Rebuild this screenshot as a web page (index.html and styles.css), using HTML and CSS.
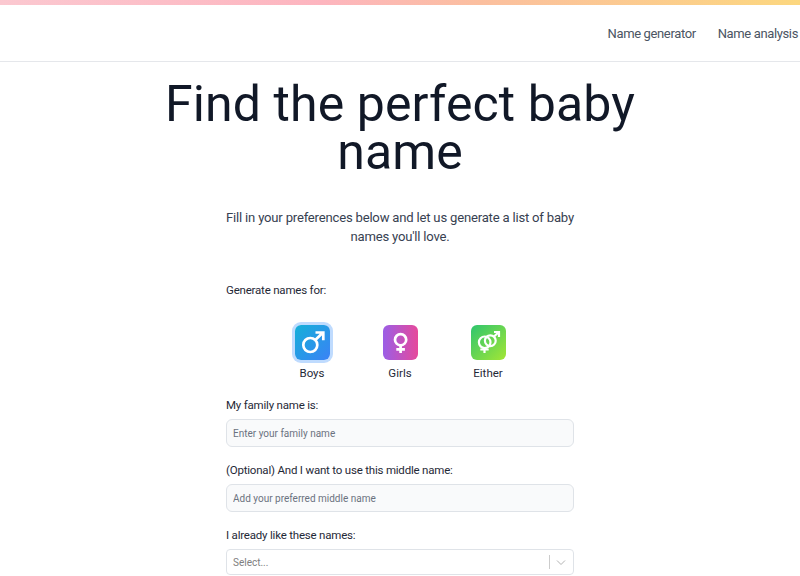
FILE: index.html
```html
<!DOCTYPE html>
<html lang="en">
<head>
    <meta charset="UTF-8">
    <title>Find the perfect baby name</title>
    <link rel="stylesheet" href="styles.css">
</head>
<body>
    <div class="top-stripe"></div>
    <header class="header">
        <a class="nav-link" href="#">Name generator</a>
        <a class="nav-link" href="#">Name analysis</a>
    </header>

    <main class="main-content">
        <h1 class="title">Find the perfect baby name</h1>
        <p class="intro">Fill in your preferences below and let us generate a list of baby names you'll love.</p>

        <form class="name-form">
            <div class="field-label">Generate names for:</div>
            <div class="gender-row">
                <div class="gender">
                    <div class="gender-icon boys selected">
                        <svg viewBox="0 0 35 35" width="35" height="35" fill="none" stroke="#fff" stroke-width="2.7">
                            <circle cx="15.3" cy="20" r="7"/>
                            <path d="M20.3 15L28 7.5M20.5 7.5h7.8v7.8"/>
                        </svg>
                    </div>
                    <span>Boys</span>
                </div>
                <div class="gender">
                    <div class="gender-icon girls">
                        <svg viewBox="0 0 35 35" width="35" height="35" fill="none" stroke="#fff" stroke-width="2.7">
                            <circle cx="17.6" cy="14.7" r="5.6"/>
                            <path d="M17.6 20V28M13.3 24.4h8.6"/>
                        </svg>
                    </div>
                    <span>Girls</span>
                </div>
                <div class="gender">
                    <div class="gender-icon either">
                        <svg viewBox="0 0 35 35" width="35" height="35" fill="none" stroke="#fff" stroke-width="2.2">
                            <circle cx="13.7" cy="17.3" r="5.8"/>
                            <circle cx="19.3" cy="15.7" r="5.4"/>
                            <path d="M23 11.5L27.7 7.3M23 7h5v5M13.5 23V28M9.3 24.5h8.4"/>
                        </svg>
                    </div>
                    <span>Either</span>
                </div>
            </div>

            <label class="field-label" for="family-name">My family name is:</label>
            <input class="text-input" id="family-name" type="text" placeholder="Enter your family name">

            <label class="field-label" for="middle-name">(Optional) And I want to use this middle name:</label>
            <input class="text-input" id="middle-name" type="text" placeholder="Add your preferred middle name">

            <div class="field-label">I already like these names:</div>
            <div class="select-box">
                <span class="select-placeholder">Select...</span>
                <span class="select-divider"></span>
                <svg class="select-arrow" viewBox="0 0 12 12" width="12" height="12" fill="none" stroke="#b3b3b3" stroke-width="1">
                    <path d="M2 4.5l4 4 4-4"/>
                </svg>
            </div>
        </form>
    </main>
</body>
</html>
```

FILE: styles.css
```css
* {
    box-sizing: border-box;
    margin: 0;
    padding: 0;
}

html, body {
    height: 100%;
    overflow: hidden;
}

body {
    font-family: 'Roboto', sans-serif;
    background-color: white;
    color: #1f2937;
}

.top-stripe {
    height: 5px;
    background-image: linear-gradient(to right, #fbc8d0, #fdb5bf 40%, #fbbf9f 60%, #fcd77f);
}

.header {
    display: flex;
    justify-content: flex-end;
    gap: 22px;
    height: 57px;
    padding: 0 2px 0 0;
    align-items: center;
    border-bottom: 1px solid #e5e7eb;
}

.nav-link {
    color: #4b5563;
    font-size: 13px;
    letter-spacing: -0.37px;
    text-decoration: none;
}

.main-content {
    display: flex;
    flex-direction: column;
    align-items: center;
}

.title {
    width: 520px;
    margin-top: 18px;
    font-size: 50px;
    line-height: 48px;
    letter-spacing: 0.1px;
    font-weight: 400;
    text-align: center;
    color: #111827;
}

.intro {
    width: 352px;
    margin-top: 32px;
    font-size: 13.1px;
    line-height: 19px;
    letter-spacing: -0.2px;
    text-align: center;
    color: #374151;
}

.name-form {
    width: 348px;
    margin-top: 36px;
}

.field-label {
    display: block;
    font-size: 11.5px;
    line-height: 16px;
    letter-spacing: -0.2px;
    color: #1f2937;
}

.gender-row {
    display: flex;
    justify-content: center;
    gap: 53px;
    margin-top: 27px;
    margin-bottom: 16px;
}

.gender {
    display: flex;
    flex-direction: column;
    align-items: center;
    gap: 5px;
    width: 35px;
    font-size: 11.5px;
    line-height: 16px;
}

.gender-icon {
    width: 35px;
    height: 35px;
    border-radius: 6px;
}

.gender-icon.selected {
    box-shadow: 0 0 0 3px #bfdbfe;
}

.boys {
    background-image: linear-gradient(to bottom right, #14b0d8, #3b82f6);
}

.girls {
    background-image: linear-gradient(to right, #9b5ee6, #e6499b);
}

.either {
    background-image: linear-gradient(to bottom right, #2ec56e, #a3e635);
}

.text-input {
    display: block;
    width: 100%;
    height: 28px;
    margin-top: 6px;
    margin-bottom: 15px;
    padding: 0 6px;
    font-family: inherit;
    font-size: 10px;
    background-color: #f9fafb;
    border: 1px solid #dfe3e8;
    border-radius: 6px;
}

.text-input::placeholder {
    color: #6b7280;
}

.select-box {
    display: flex;
    align-items: center;
    height: 26px;
    margin-top: 6px;
    padding: 0 6px;
    border: 1px solid #dfe3e8;
    border-radius: 4px;
}

.select-placeholder {
    flex-grow: 1;
    font-size: 10px;
    color: #808080;
}

.select-divider {
    width: 1px;
    height: 14px;
    margin-right: 5px;
    background-color: #cccccc;
}
```
